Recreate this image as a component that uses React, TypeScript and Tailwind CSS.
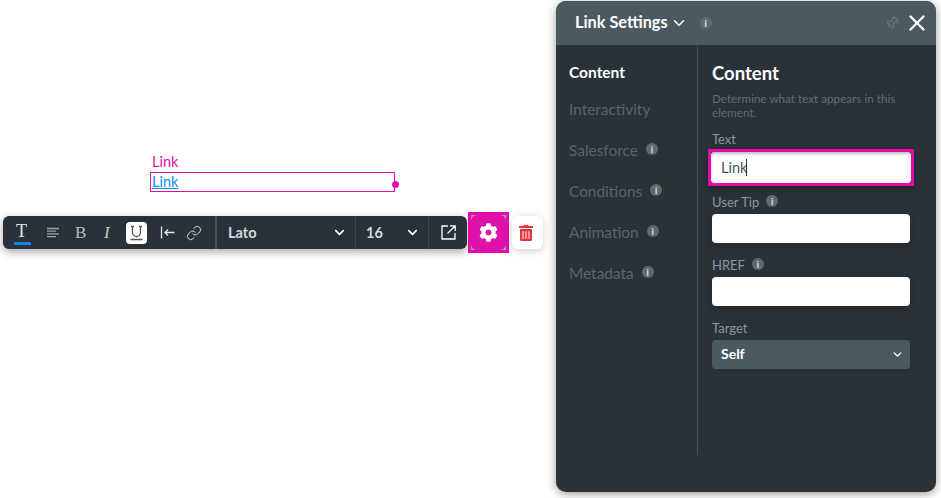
import { ChevronDown, Pin, X, Link } from "lucide-react";
import { FaCog, FaTrashAlt } from "react-icons/fa";

const Info = ({ className = "" }: { className?: string }) => (
  <span className={`flex h-3 w-3 items-center justify-center rounded-full bg-[#5d6a70] text-[9px] leading-none font-bold text-[#e4e7e8] ${className}`}>
    i
  </span>
);

const NavItem = ({ label, info, active }: { label: string; info?: boolean; active?: boolean }) => (
  <li className={`flex h-[41px] items-center gap-[8px] ${active ? "-mb-[4px] text-[15.5px] font-bold text-white" : "text-[15.4px] text-[#58656c]"}`}>
    {label}
    {info && <Info className="-mt-[3px]" />}
  </li>
);

const Field = ({ label, info, children }: { label: string; info?: boolean; children?: React.ReactNode }) => (
  <div className="flex flex-col">
    <div className="flex h-[19px] items-center gap-[7px] text-[13px] text-[#8d979c]">
      {label}
      {info && <Info className="-mt-[3px]" />}
    </div>
    {children ?? <div className="mt-[2px] h-[29px] rounded-[4px] bg-white shadow-[0_2px_6px_rgba(0,0,0,0.2)]" />}
  </div>
);

const Toolbar = () => (
  <div className="flex items-start gap-[1px]">
    <div className="flex h-[33px] w-[464px] items-center rounded-[6px] bg-[#29323a] text-[#d5d9db] shadow-[0_3px_9px_rgba(0,0,0,0.35)]">
      <div className="flex h-full w-[214px] shrink-0 items-center border-r-2 border-[#4b565c]">
        {/* text colour */}
        <div className="ml-[11px] flex h-full w-[17px] flex-col justify-end">
          <span className="ml-[2px] font-['Liberation_Serif',serif] text-[18px] leading-[21px] text-[#e2e5e6]">T</span>
          <div className="mb-[4px] h-[3px] w-[17px] bg-[#0a84e8]" />
        </div>
        <svg className="ml-[15px]" width="14" height="12" viewBox="0 0 14 12" stroke="#9aa3a7" strokeWidth="1.3">
          <path d="M1 1.5h12M1 4.2h9M1 6.9h12M1 9.6h9" />
        </svg>
        <span className="ml-[15px] w-[11px] font-['Liberation_Serif',serif] text-[17px] leading-none text-[#b6bcbf]">B</span>
        <span className="ml-[18px] w-[9px] font-['Liberation_Serif',serif] text-[17px] leading-none text-[#c3c8ca] italic">I</span>
        <div className="ml-[13px] flex h-[22px] w-[21px] items-center justify-center rounded-[4px] bg-white">
          <svg width="15" height="16" viewBox="0 0 15 16" fill="none" stroke="#4c575d" strokeWidth="1.3">
            <path d="M2 1.5h3M10 1.5h3M3.5 1.5v6a4 4 0 0 0 8 0v-6M1.5 14.5h12" />
          </svg>
        </div>
        <svg className="ml-[13px]" width="15" height="13" viewBox="0 0 15 13" fill="none" stroke="#e2e5e6" strokeWidth="1.3">
          <path d="M1.5 0.5v12M14.5 6.5H5M8 3.5 5 6.5l3 3" />
        </svg>
        <Link className="ml-[11px] text-[#d5d9db]" size={16} strokeWidth={1.5} />
      </div>
      <div className="flex h-full w-[139px] shrink-0 items-center justify-between border-r border-[#3d474d] pr-[8px] pl-[11px] text-[14.5px] font-bold">
        Lato
        <ChevronDown size={15} strokeWidth={2.6} className="text-white" />
      </div>
      <div className="flex h-full w-[73px] shrink-0 items-center justify-between border-r border-[#3d474d] pr-[8px] pl-[10px] text-[14.5px] font-bold">
        16
        <ChevronDown size={15} strokeWidth={2.6} className="text-white" />
      </div>
      <div className="flex flex-1 items-center justify-center">
        <svg width="15" height="15" viewBox="0 0 15 15" fill="none" stroke="#ffffff" strokeWidth="1.3">
          <path d="M7 1H1v13h13V8M9 .8h5.2V6M14 1 6.5 8.5" />
        </svg>
      </div>
    </div>
    <div className="-mt-[4px] flex h-[41px] w-[41px] items-center justify-center border-[3px] border-[#e40baa] bg-[#a5a5a5]">
      <div className="flex h-full w-full items-center justify-center rounded-[6px] bg-[#e010aa]">
        <FaCog size={19} className="text-white" />
      </div>
    </div>
    <div className="ml-[2px] flex h-[33px] w-[31px] items-center justify-center rounded-[6px] bg-white pr-[3px] shadow-[0_2px_8px_rgba(0,0,0,0.18)]">
      <FaTrashAlt size={16} className="text-[#e8343a]" />
    </div>
  </div>
);

const App = () => {
  return (
    <div className="flex h-[498px] w-[941px] overflow-hidden bg-white font-['Lato',sans-serif]">
      <div className="w-[556px] shrink-0 pt-[153px] pl-[3px]">
        <div className="pl-[149px] text-[14.5px] leading-[18px] text-[#e010aa]">Link</div>
        <div className="relative mt-[1px] ml-[147px] h-[20px] w-[245px] border border-[#e010aa] pl-[1px] text-[14.5px] leading-[18px] text-[#0a8fe8] underline">
          Link
          <span className="absolute top-[8px] -right-[5px] h-[7px] w-[7px] rounded-full bg-[#e010aa]" />
        </div>
        <div className="mt-[24px]">
          <Toolbar />
        </div>
      </div>

      <div className="mt-[1px] flex h-[491px] w-[380px] shrink-0 flex-col overflow-hidden rounded-[10px] bg-[#293238] shadow-[0_2px_10px_rgba(0,0,0,0.4)]">
        <header className="flex h-[44px] shrink-0 items-center bg-[#4b5a61] pr-[6px] pl-[19px]">
          <span className="-mt-[2px] text-[16.3px] font-bold text-white">Link Settings</span>
          <ChevronDown size={18} strokeWidth={2} className="ml-[2px] text-white" />
          <Info className="ml-[12px]" />
          <Pin size={14} className="ml-auto rotate-45 text-[#6a777d]" />
          <X size={26} strokeWidth={2.2} className="ml-[5px] text-white" />
        </header>
        <div className="flex">
          <nav className="h-[410px] w-[142px] shrink-0 border-r border-[#465157] pt-[7px] pl-[13px]">
            <ul>
              <NavItem label="Content" active />
              <NavItem label="Interactivity" />
              <NavItem label="Salesforce" info />
              <NavItem label="Conditions" info />
              <NavItem label="Animation" info />
              <NavItem label="Metadata" info />
            </ul>
          </nav>
          <section className="flex w-[198px] flex-col pt-[15px] pl-[14px]">
            <h2 className="text-[18.5px] leading-[26px] font-bold text-white">Content</h2>
            <p className="mt-[5px] w-[190px] text-[11.7px] leading-[14px] text-[#5f6c72]">
              Determine what text appears in this element.
            </p>
            <div className="mt-[11px] w-[198px]">
              <Field label="Text">
                <div className="-ml-[4px] h-[37px] w-[206px] border-[3px] border-[#e40baa] bg-[#293238] shadow-[0_2px_6px_rgba(0,0,0,0.35)]">
                  <div className="flex h-full items-center rounded-[3px] bg-white pl-[10px] text-[14.5px] text-[#4a555b] shadow-[inset_0_2px_3px_rgba(0,0,0,0.25)]">
                    Link
                    <span className="-ml-[1px] h-[17px] w-px bg-[#29323a]" />
                  </div>
                </div>
              </Field>
              <div className="mt-[7px] flex flex-col gap-[13px]">
                <Field label="User Tip" info />
                <Field label="HREF" info />
                <Field label="Target">
                  <div className="mt-[2px] flex h-[29px] items-center justify-between rounded-[4px] bg-[#4b5a61] pr-[6px] pb-[2px] pl-[9px] text-[14px] font-bold text-white">
                    Self
                    <ChevronDown size={13} strokeWidth={2.6} className="mt-[2px]" />
                  </div>
                </Field>
              </div>
            </div>
          </section>
        </div>
      </div>
    </div>
  );
};

export default App;
